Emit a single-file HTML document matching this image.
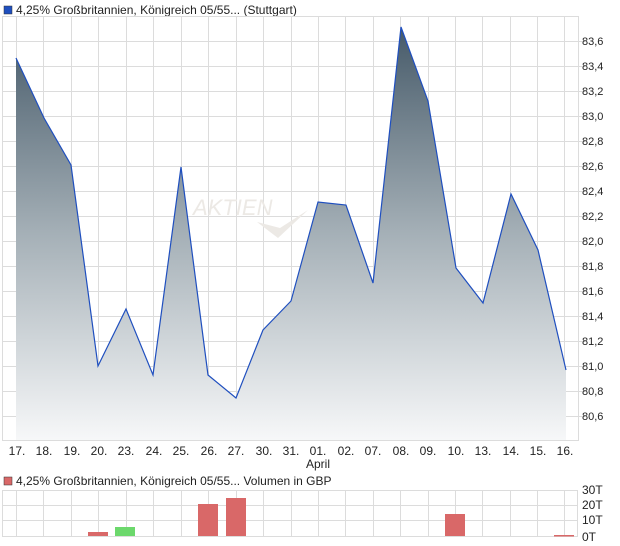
<!DOCTYPE html>
<html><head><meta charset="utf-8"><style>
html,body{margin:0;padding:0;background:#fff;}
svg{display:block;font-family:"Liberation Sans",sans-serif;}
</style></head><body>
<svg width="620" height="546" viewBox="0 0 620 546" xmlns="http://www.w3.org/2000/svg">
<defs>
<linearGradient id="g" x1="0" y1="27" x2="0" y2="441" gradientUnits="userSpaceOnUse">
<stop offset="0" stop-color="#465a69"/>
<stop offset="0.5" stop-color="#a5b0b7"/>
<stop offset="1" stop-color="#f7f8f9"/>
</linearGradient>
</defs>
<rect x="4" y="6" width="8" height="8" fill="#1f4fbf" stroke="#333" stroke-width="0.5"/>
<text x="16" y="14" font-size="12" fill="#222">4,25% Großbritannien, Königreich 05/55... (Stuttgart)</text>
<g stroke="#dcdcdc" stroke-width="1" fill="none">
<rect x="2.5" y="16.5" width="576" height="424"/>
<path d="M16.5 17V441M43.5 17V441M71.5 17V441M98.5 17V441M126.5 17V441M153.5 17V441M181.5 17V441M208.5 17V441M236.5 17V441M263.5 17V441M291.5 17V441M318.5 17V441M345.5 17V441M373.5 17V441M400.5 17V441M428.5 17V441M455.5 17V441M482.5 17V441M510.5 17V441M537.5 17V441M564.5 17V441"/>
<path d="M3 41.5H585M3 66.5H585M3 91.5H585M3 116.5H585M3 141.5H585M3 166.5H585M3 191.5H585M3 216.5H585M3 241.5H585M3 266.5H585M3 291.5H585M3 316.5H585M3 341.5H585M3 366.5H585M3 391.5H585M3 416.5H585"/>
</g>
<text x="193" y="215" font-size="22" font-style="italic" fill="#ece9e5">AKTIEN</text>
<path d="M257 222 L278 238 L308 210 L280 228 Z" fill="#ece9e5"/>
<path d="M16 58 L44 118 L71 165 L98 366 L126 309 L153 375 L181 167 L208 375 L236 398 L263 330 L291 301 L318 202 L346 205 L373 283 L401 27 L428 101 L456 268 L483 303 L511 194 L538 250 L566 370 L566 440 L16 440 Z" fill="url(#g)"/>
<path d="M16 58 L44 118 L71 165 L98 366 L126 309 L153 375 L181 167 L208 375 L236 398 L263 330 L291 301 L318 202 L346 205 L373 283 L401 27 L428 101 L456 268 L483 303 L511 194 L538 250 L566 370" fill="none" stroke="#1f4fbf" stroke-width="1.2"/>
<g font-size="11" fill="#222">
<text x="582" y="45">83,6</text><text x="582" y="70">83,4</text><text x="582" y="95">83,2</text><text x="582" y="120">83,0</text><text x="582" y="145">82,8</text><text x="582" y="170">82,6</text><text x="582" y="195">82,4</text><text x="582" y="220">82,2</text><text x="582" y="245">82,0</text><text x="582" y="270">81,8</text><text x="582" y="295">81,6</text><text x="582" y="320">81,4</text><text x="582" y="345">81,2</text><text x="582" y="370">81,0</text><text x="582" y="395">80,8</text><text x="582" y="420">80,6</text>
</g>
<g font-size="12" fill="#222" text-anchor="middle">
<text x="17" y="455">17.</text><text x="44" y="455">18.</text><text x="72" y="455">19.</text><text x="99" y="455">20.</text><text x="126" y="455">23.</text><text x="154" y="455">24.</text><text x="181" y="455">25.</text><text x="209" y="455">26.</text><text x="236" y="455">27.</text><text x="264" y="455">30.</text><text x="291" y="455">31.</text><text x="318" y="455">01.</text><text x="346" y="455">02.</text><text x="373" y="455">07.</text><text x="401" y="455">08.</text><text x="428" y="455">09.</text><text x="456" y="455">10.</text><text x="483" y="455">13.</text><text x="511" y="455">14.</text><text x="538" y="455">15.</text><text x="565" y="455">16.</text>
<text x="318" y="468">April</text>
</g>
<rect x="4" y="477" width="8" height="8" fill="#d96868" stroke="#333" stroke-width="0.5"/>
<text x="16" y="485" font-size="12" fill="#222">4,25% Großbritannien, Königreich 05/55... Volumen in GBP</text>
<g stroke="#dcdcdc" stroke-width="1" fill="none">
<rect x="2.5" y="490.5" width="575" height="46"/>
<path d="M16.5 491V536M43.5 491V536M71.5 491V536M98.5 491V536M126.5 491V536M153.5 491V536M181.5 491V536M208.5 491V536M236.5 491V536M263.5 491V536M291.5 491V536M318.5 491V536M345.5 491V536M373.5 491V536M400.5 491V536M428.5 491V536M455.5 491V536M482.5 491V536M510.5 491V536M537.5 491V536M564.5 491V536"/>
<path d="M3 505.5H578M3 520.5H578"/>
</g>
<g fill="#d96868">
<rect x="88" y="532" width="20" height="4"/>
<rect x="198" y="504" width="20" height="32"/>
<rect x="226" y="498" width="20" height="38"/>
<rect x="445" y="514" width="20" height="22"/>
<rect x="554" y="535" width="20" height="1.5"/>
</g>
<rect x="115" y="527" width="20" height="9" fill="#6cd86c"/>
<g font-size="12" fill="#222">
<text x="582" y="494">30T</text><text x="582" y="509">20T</text><text x="582" y="524">10T</text><text x="582" y="541">0T</text>
</g>
</svg>
</body></html>
